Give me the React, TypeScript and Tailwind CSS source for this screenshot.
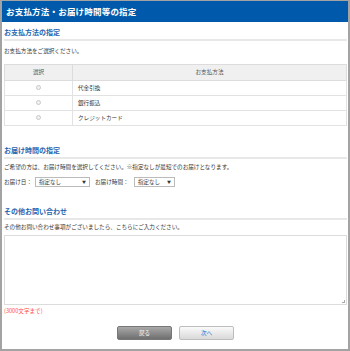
import React from "react";

const methods = ["代金引換", "銀行振込", "クレジットカード"];

function SectionTitle({ children }: { children: React.ReactNode }) {
  return (
    <div className="h-[8px] flex items-center border-b-2 border-[#e8e8e8] pb-[3px] box-content">
      <span className="text-[7px] leading-[8px] font-bold text-[#2565b0]">{children}</span>
    </div>
  );
}

function Radio() {
  return <span className="inline-block w-[5px] h-[5px] rounded-full border border-[#c8c8c8] bg-[#f2f2f2]" />;
}

function Select({ w }: { w: string }) {
  return (
    <div className={`flex items-center justify-between ${w} h-[10px] border border-[#bbb] bg-white px-[3px] text-[5.5px]`}>
      <span>指定なし</span>
      <span className="text-[4px]">▼</span>
    </div>
  );
}

export default function App() {
  return (
    <div
      className="w-[350px] h-[351px] bg-white border-x-2 border-b-2 border-t border-[#a3a3a3] text-[#333] flex flex-col"
      style={{ fontFamily: '"Noto Sans CJK JP", "Noto Sans", sans-serif' }}
    >
      <div className="h-[21px] bg-[#0059ab] flex items-center px-[4px]">
        <h1 className="text-[8.5px] font-bold text-white tracking-[0.2px]">お支払方法・お届け時間等の指定</h1>
      </div>

      <div className="px-[2px] pr-[1px] flex flex-col">
        <div className="mt-[6px]">
          <SectionTitle>お支払方法の指定</SectionTitle>
        </div>
        <p className="mt-[6px] text-[5.6px] leading-[9px]">お支払方法をご選択ください。</p>

        <table className="mt-[8px] w-full border-collapse text-[5.6px]">
          <thead>
            <tr className="h-[16px] bg-[#f0f0f0] text-[#555]">
              <th className="w-[68px] border border-[#dcdcdc] font-normal">選択</th>
              <th className="border border-[#dcdcdc] font-normal">お支払方法</th>
            </tr>
          </thead>
          <tbody>
            {methods.map((m) => (
              <tr key={m} className="h-[15px]">
                <td className="border border-[#e2e2e2] text-center leading-[8px]">
                  <Radio />
                </td>
                <td className="border border-[#e2e2e2] pl-[5px] leading-[8px]">{m}</td>
              </tr>
            ))}
          </tbody>
        </table>

        <div className="mt-[20px]">
          <SectionTitle>お届け時間の指定</SectionTitle>
        </div>
        <p className="mt-[4px] text-[5.6px] leading-[9px]">
          ご希望の方は、お届け時間を選択してください。※指定なしが最短でのお届けとなります。
        </p>
        <div className="mt-[5px] flex items-center text-[5.6px]">
          <span className="w-[31px]">お届け日：</span>
          <Select w="w-[55px]" />
          <span className="ml-[5px] w-[39px]">お届け時間：</span>
          <Select w="w-[41px]" />
        </div>

        <div className="mt-[20px]">
          <SectionTitle>その他お問い合わせ</SectionTitle>
        </div>
        <p className="mt-[3px] text-[5.6px] leading-[9px]">
          その他お問い合わせ事項がございましたら、こちらにご入力ください。
        </p>
        <div className="mt-[3px] h-[70px] border border-[#dcdcdc] bg-white relative">
          <span className="absolute right-[1px] bottom-[1px] w-[3px] h-[3px] border-r border-b border-[#aaa]" />
        </div>
        <p className="mt-[2px] text-[5.6px] leading-[8px] text-[#ff4d4d]">(3000文字まで)</p>

        <div className="mt-[11px] flex justify-center gap-[7px]">
          <button className="w-[55px] h-[14px] rounded-[2px] border border-[#777] bg-gradient-to-b from-[#a9a9a9] to-[#6f6f6f] text-white text-[5.6px]">
            戻る
          </button>
          <button className="w-[55px] h-[14px] rounded-[2px] border border-[#bdbdbd] bg-gradient-to-b from-[#fafafa] to-[#d9d9d9] text-[#2b6fd6] text-[5.6px]">
            次へ
          </button>
        </div>
      </div>
    </div>
  );
}
